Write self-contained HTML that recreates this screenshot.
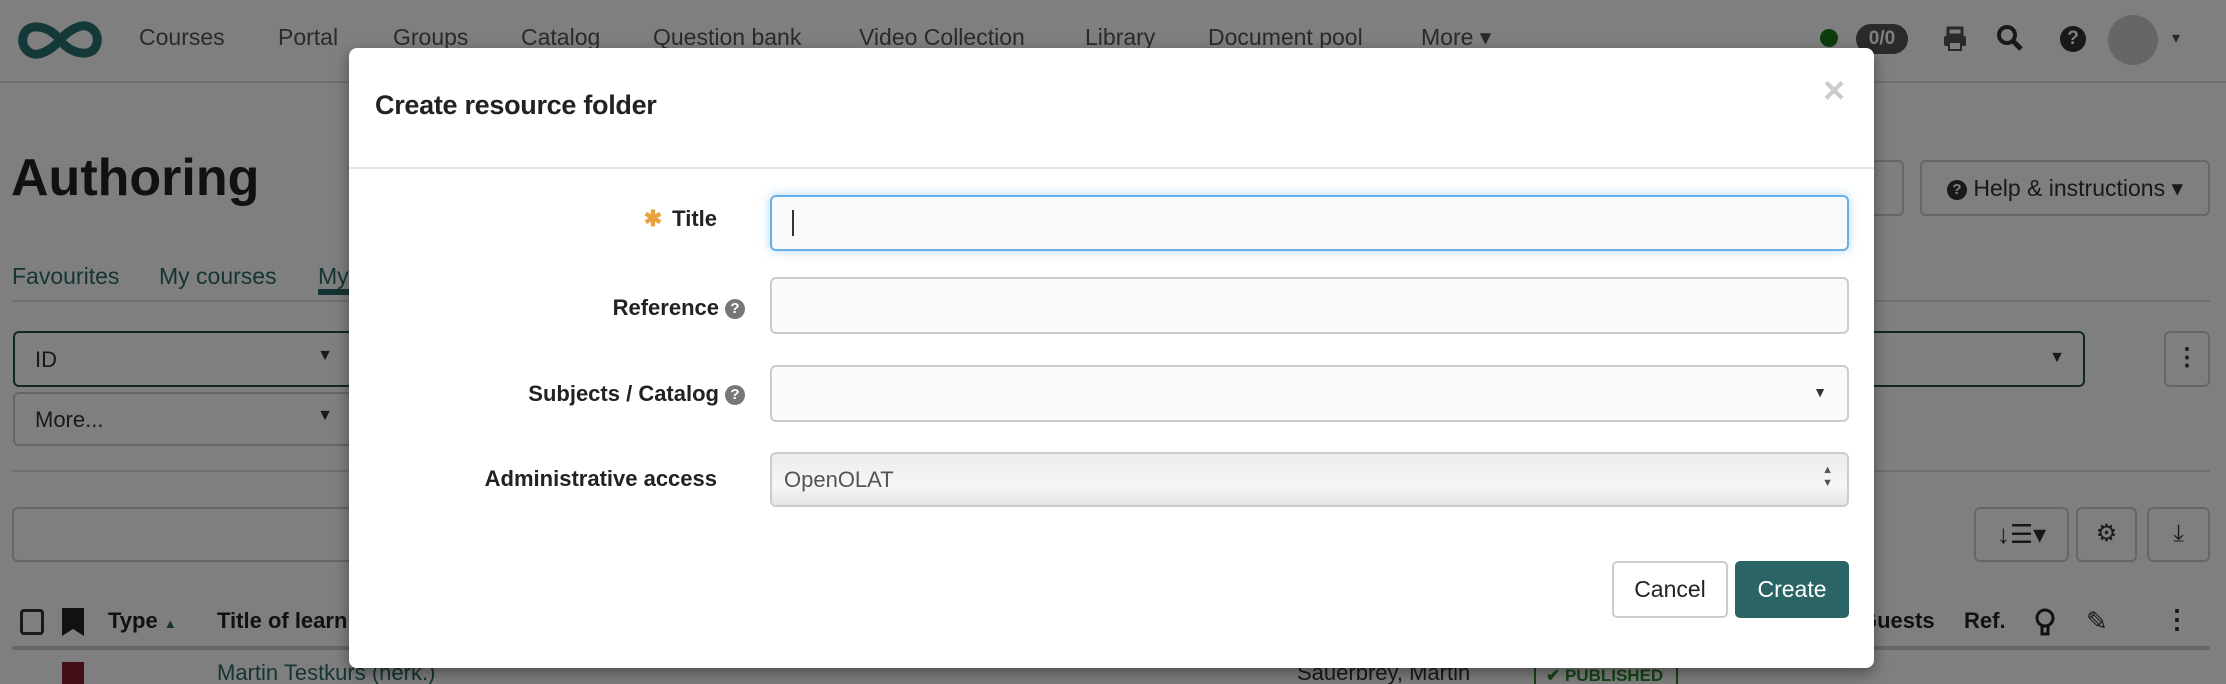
<!DOCTYPE html>
<html style="overflow:hidden;height:684px"><head><meta charset="utf-8"><style>
*{box-sizing:border-box;margin:0;padding:0}
body{width:2226px;height:684px;overflow:hidden;background:#fff;font-family:"Liberation Sans",sans-serif;color:#333;position:relative}
.a{position:absolute;white-space:nowrap}
.nav{font-size:23px;color:#555;top:24px}
.btn{position:absolute;border:2px solid #ccc;border-radius:6px;background:#fff}
.ov{position:fixed;left:0;top:0;width:2226px;height:684px;background:rgba(0,0,0,0.5)}
.modal{position:absolute;left:349px;top:48px;width:1525px;height:620px;background:#fff;border-radius:8px;box-shadow:0 5px 15px rgba(0,0,0,.4)}
.lbl{position:absolute;right:calc(1525px - 368px);font-size:22px;font-weight:bold;color:#222;text-align:right}
.inp{position:absolute;left:421px;width:1079px;border:2px solid #ccc;border-radius:6px;background:#fafafa}
.q{display:inline-block;width:20px;height:20px;border-radius:50%;background:#777;color:#fff;font-size:15px;text-align:center;line-height:20px;vertical-align:2px;margin-left:6px}
</style></head><body>
<svg class="a" style="left:15px;top:18px" width="90" height="44" viewBox="0 0 90 44"><path d="M45 22 C35 8 14 4 9 16 C4 28 14 38 24 36 C32 34 40 28 45 22 C50 16 58 10 66 8 C76 6 86 16 81 28 C76 40 55 36 45 22Z" fill="none" stroke="#2a7070" stroke-width="9"/></svg>
<div class="a nav" style="left:139px">Courses</div>
<div class="a nav" style="left:278px">Portal</div>
<div class="a nav" style="left:393px">Groups</div>
<div class="a nav" style="left:521px">Catalog</div>
<div class="a nav" style="left:653px">Question bank</div>
<div class="a nav" style="left:859px">Video Collection</div>
<div class="a nav" style="left:1085px">Library</div>
<div class="a nav" style="left:1208px">Document pool</div>
<div class="a nav" style="left:1421px">More ▾</div>
<div class="a" style="left:1820px;top:29px;width:18px;height:18px;border-radius:50%;background:#1a7a1a"></div>
<div class="a" style="left:1856px;top:24px;width:52px;height:30px;border-radius:15px;background:#555;color:#fff;font-size:19px;text-align:center;line-height:30px;font-weight:bold">0/0</div>
<svg class="a" style="left:1942px;top:26px" width="26" height="26"><rect x="6" y="2" width="14" height="7" fill="none" stroke="#555" stroke-width="3"/><rect x="2" y="10" width="22" height="10" rx="2" fill="#555"/><rect x="7" y="16" width="12" height="8" fill="#fff" stroke="#555" stroke-width="2"/></svg>
<svg class="a" style="left:1996px;top:24px" width="28" height="30"><circle cx="11" cy="11" r="8" stroke="#333" stroke-width="4" fill="none"/><path d="M17 17l8 8" stroke="#333" stroke-width="5"/></svg>
<div class="a" style="left:2060px;top:26px;width:26px;height:26px;border-radius:50%;background:#333;color:#fff;font-weight:bold;font-size:19px;text-align:center;line-height:26px">?</div>
<div class="a" style="left:2108px;top:15px;width:50px;height:50px;border-radius:50%;background:#ccc"></div>
<div class="a" style="left:2172px;top:28px;font-size:16px;color:#555">▾</div>
<div class="a" style="left:0;top:81px;width:2226px;height:2px;background:#ddd"></div>
<div class="a" style="left:11px;top:148px;font-size:52px;font-weight:bold;color:#222">Authoring</div>
<div class="btn" style="left:1860px;top:160px;width:44px;height:56px"></div>
<div class="btn" style="left:1920px;top:160px;width:290px;height:56px;font-size:23px;line-height:52px;text-align:center;color:#333"><span style="display:inline-block;width:20px;height:20px;border-radius:50%;background:#333;color:#fff;font-size:15px;line-height:20px;font-weight:bold;vertical-align:2px">?</span> Help &amp; instructions ▾</div>
<div class="a" style="left:12px;top:263px;font-size:23px;color:#2a6b6b">Favourites</div>
<div class="a" style="left:159px;top:263px;font-size:23px;color:#2a6b6b">My courses</div>
<div class="a" style="left:318px;top:263px;font-size:23px;color:#2a6b6b">My</div>
<div class="a" style="left:318px;top:289px;width:40px;height:6px;background:#2a6b6b"></div>
<div class="a" style="left:12px;top:300px;width:2198px;height:2px;background:#ddd"></div>
<div class="a" style="left:13px;top:331px;width:340px;height:56px;border:2px solid #1f4f4f;border-radius:6px;font-size:22px;padding:14px 20px">ID<span style="position:absolute;right:18px;font-size:16px">▼</span></div>
<div class="a" style="left:1400px;top:331px;width:685px;height:56px;border:2px solid #1f4f4f;border-radius:6px"><span style="position:absolute;right:18px;top:16px;font-size:16px">▼</span></div>
<div class="btn" style="left:2164px;top:331px;width:46px;height:56px;text-align:center;font-size:24px;line-height:50px;font-weight:bold">⋮</div>
<div class="a" style="left:13px;top:392px;width:340px;height:54px;border:2px solid #ccc;border-radius:6px;font-size:22px;padding:13px 20px">More...<span style="position:absolute;right:18px;font-size:16px">▼</span></div>
<div class="a" style="left:12px;top:470px;width:2198px;height:2px;background:#ddd"></div>
<div class="btn" style="left:12px;top:507px;width:400px;height:55px"></div>
<div class="btn" style="left:1974px;top:507px;width:95px;height:55px;font-size:26px;text-align:center;line-height:50px">↓☰▾</div>
<div class="btn" style="left:2076px;top:507px;width:61px;height:55px;font-size:24px;text-align:center;line-height:50px">⚙</div>
<div class="btn" style="left:2147px;top:507px;width:63px;height:55px;font-size:24px;text-align:center;line-height:50px">⤓</div>
<div class="a" style="left:20px;top:609px;width:24px;height:26px;border:3px solid #333;border-radius:4px"></div>
<div class="a" style="left:62px;top:608px;width:22px;height:28px;background:#222;clip-path:polygon(0 0,100% 0,100% 100%,50% 75%,0 100%)"></div>
<div class="a" style="left:108px;top:608px;font-size:22px;font-weight:bold;color:#222">Type <span style="font-size:13px;color:#2a6b6b">▲</span></div>
<div class="a" style="left:217px;top:608px;font-size:22px;font-weight:bold;color:#222">Title of learning</div>
<div class="a" style="left:1860px;top:608px;font-size:22px;font-weight:bold;color:#222">Guests</div>
<div class="a" style="left:1964px;top:608px;font-size:22px;font-weight:bold;color:#222">Ref.</div>
<svg class="a" style="left:2034px;top:608px" width="22" height="30"><circle cx="11" cy="10" r="8" fill="none" stroke="#222" stroke-width="3"/><path d="M8 18v8h6v-8" fill="none" stroke="#222" stroke-width="3"/></svg>
<div class="a" style="left:2086px;top:606px;font-size:26px">✎</div>
<div class="a" style="left:2164px;top:604px;font-size:26px;font-weight:bold">⋮</div>
<div class="a" style="left:12px;top:646px;width:2198px;height:4px;background:#ccc"></div>
<div class="a" style="left:62px;top:662px;width:22px;height:22px;background:#8a1a30"></div>
<div class="a" style="left:217px;top:660px;font-size:22px;color:#2a6b6b">Martin Testkurs (herk.)</div>
<div class="a" style="left:1297px;top:660px;font-size:22px">Sauerbrey, Martin</div>
<div class="a" style="left:1534px;top:660px;width:144px;height:30px;border:2px solid #2a8a2a;font-size:17px;font-weight:bold;color:#2a8a2a;padding:4px 10px">✔ PUBLISHED</div>
<div class="ov"></div>
<div class="modal">
<div class="a" style="left:26px;top:42px;font-size:27px;color:#222;font-weight:bold;letter-spacing:-0.3px">Create resource folder</div>
<div class="a" style="left:1474px;top:22px;font-size:38px;font-weight:bold;color:#ccc">×</div>
<div class="a" style="left:0;top:119px;width:1525px;height:2px;background:#e5e5e5"></div>
<div class="lbl" style="top:158px"><span style="color:#e8a33a;margin-right:10px">✱</span>Title</div>
<div class="lbl" style="top:247px;right:calc(1525px - 396px)">Reference<span class="q">?</span></div>
<div class="lbl" style="top:333px;right:calc(1525px - 396px)">Subjects / Catalog<span class="q">?</span></div>
<div class="lbl" style="top:418px">Administrative access</div>
<div class="inp" style="top:147px;height:56px;border-color:#66afe9;box-shadow:0 0 10px rgba(102,175,233,.5)"><div class="a" style="left:20px;top:13px;width:2px;height:26px;background:#333"></div></div>
<div class="inp" style="top:229px;height:57px"></div>
<div class="inp" style="top:317px;height:57px"><span class="a" style="right:20px;top:17px;font-size:14px">▼</span></div>
<div class="inp" style="top:404px;height:55px;background:linear-gradient(#ececec,#f6f6f6 60%,#e6e6e6);font-size:22px;color:#555;padding:13px 12px">OpenOLAT<span class="a" style="right:14px;top:10px;font-size:11px;line-height:13px">▲<br>▼</span></div>
<div class="a" style="left:1263px;top:513px;width:116px;height:57px;border:2px solid #ccc;border-radius:5px;font-size:23px;text-align:center;line-height:53px;color:#222">Cancel</div>
<div class="a" style="left:1386px;top:513px;width:114px;height:57px;background:#2a6464;border-radius:5px;font-size:23px;text-align:center;line-height:57px;color:#fff">Create</div>
</div>
</body></html>
